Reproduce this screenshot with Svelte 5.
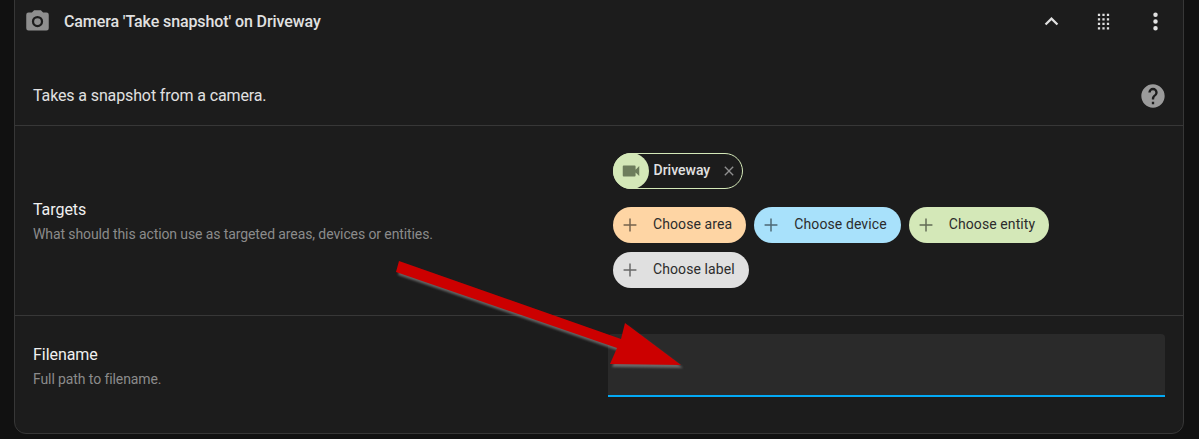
<script>
  const pickers = [
    { label: 'Choose area', cls: 'area' },
    { label: 'Choose device', cls: 'device' },
    { label: 'Choose entity', cls: 'entity' },
    { label: 'Choose label', cls: 'tag' }
  ];
</script>

<div class="page">
  <section class="card">
    <header class="head">
      <svg class="cam" viewBox="0 0 24 24"><path d="M4 4h3l2-2h6l2 2h3a2 2 0 0 1 2 2v12a2 2 0 0 1-2 2H4a2 2 0 0 1-2-2V6a2 2 0 0 1 2-2m8 3a5 5 0 1 0 0 10 5 5 0 0 0 0-10m0 2a3 3 0 1 1 0 6 3 3 0 0 1 0-6"/></svg>
      <h2>Camera 'Take snapshot' on Driveway</h2>
      <div class="actions">
        <svg viewBox="0 0 24 24"><path d="M7.41 15.41 12 10.83l4.59 4.58L18 14l-6-6-6 6z"/></svg>
        <svg viewBox="0 0 24 24"><path d="M7 19v-2h2v2zm4 0v-2h2v2zm4 0v-2h2v2zm-8-4v-2h2v2zm4 0v-2h2v2zm4 0v-2h2v2zm-8-4V9h2v2zm4 0V9h2v2zm4 0V9h2v2zM7 7V5h2v2zm4 0V5h2v2zm4 0V5h2v2z"/></svg>
        <svg viewBox="0 0 24 24"><path d="M12 16a2 2 0 1 1 0 4 2 2 0 0 1 0-4m0-6a2 2 0 1 1 0 4 2 2 0 0 1 0-4m0-6a2 2 0 1 1 0 4 2 2 0 0 1 0-4"/></svg>
      </div>
    </header>

    <div class="intro">
      <p>Takes a snapshot from a camera.</p>
      <svg class="help" viewBox="0 0 24 24"><path d="M15.07 11.25l-.9.92C13.45 12.89 13 13.5 13 15h-2v-.5c0-1.11.45-2.11 1.17-2.83l1.24-1.26c.37-.36.59-.86.59-1.41a2 2 0 0 0-2-2 2 2 0 0 0-2 2H8a4 4 0 0 1 4-4 4 4 0 0 1 4 4c0 .88-.36 1.67-.93 2.25M13 19h-2v-2h2M12 2A10 10 0 0 0 2 12a10 10 0 0 0 10 10 10 10 0 0 0 10-10c0-5.53-4.5-10-10-10"/></svg>
    </div>

    <div class="row targets">
      <div class="info">
        <h3>Targets</h3>
        <p>What should this action use as targeted areas, devices or entities.</p>
      </div>
      <div class="control">
        <div class="chip">
          <span class="chip-icon">
            <svg viewBox="0 0 24 24"><path d="M17 10.5V7a1 1 0 0 0-1-1H4a1 1 0 0 0-1 1v10a1 1 0 0 0 1 1h12a1 1 0 0 0 1-1v-3.5l4 4v-11z"/></svg>
          </span>
          <span class="chip-label">Driveway</span>
          <svg class="close" viewBox="0 0 24 24"><path d="M19 6.41 17.59 5 12 10.59 6.41 5 5 6.41 10.59 12 5 17.59 6.41 19 12 13.41 17.59 19 19 17.59 13.41 12z"/></svg>
        </div>
        <div class="pickers">
          {#each pickers as p}
            <div class="pick {p.cls}">
              <svg viewBox="0 0 24 24"><path d="M19 12.8h-6.2V19h-1.6v-6.2H5v-1.6h6.2V5h1.6v6.2H19z"/></svg>
              <span>{p.label}</span>
            </div>
          {/each}
        </div>
      </div>
    </div>

    <div class="row file">
      <div class="info">
        <h3>Filename</h3>
        <p>Full path to filename.</p>
      </div>
      <div class="field"></div>
    </div>
  </section>

  <svg class="arrow" width="320" height="160" viewBox="0 0 320 160">
    <defs>
      <filter id="sh" x="-10%" y="-10%" width="120%" height="130%">
        <feGaussianBlur stdDeviation="1" />
      </filter>
    </defs>
    <path d="M14 11 L236 89 L240 73 L296 115 L225 114 L232 98 L11 22 Z" transform="translate(2 3)" fill="#8a8a8a" opacity=".65" filter="url(#sh)" />
    <path d="M14 11 L236 89 L240 73 L296 115 L225 114 L232 98 L11 22 Z" fill="#cc0000" />
  </svg>
</div>

<style>
  :global(body) {
    margin: 0;
    background: #111111;
  }
  .page {
    position: relative;
    width: 1199px;
    height: 439px;
    overflow: hidden;
    font-family: Roboto, "Liberation Sans", sans-serif;
    color: #e1e1e1;
  }
  .card {
    margin: -12px 15px 0 14px;
    height: 446px;
    box-sizing: border-box;
    background: #1c1c1c;
    border: 1px solid #373737;
    border-radius: 12px;
    display: flex;
    flex-direction: column;
  }
  .head {
    display: flex;
    align-items: center;
    height: 42px;
    margin-top: 11px;
    padding: 0 8px 0 9px;
    flex: none;
  }
  .cam {
    width: 27px;
    height: 27px;
    fill: #8f8f8f;
    flex: none;
  }
  h2 {
    margin: 0 0 0 13px;
    font-size: 16px;
    font-weight: 500;
    color: #e1e1e1;
    letter-spacing: -0.1px;
    flex: 1;
  }
  .actions {
    display: flex;
    gap: 25px;
    margin-right: 6px;
  }
  .actions svg {
    width: 27px;
    height: 27px;
    fill: #e1e1e1;
  }
  .intro {
    display: flex;
    align-items: center;
    justify-content: space-between;
    height: 84px;
    flex: none;
    padding: 23px 17px 0 18px;
    box-sizing: border-box;
    border-bottom: 1px solid #373737;
  }
  .intro p {
    margin: 0;
    font-size: 16px;
    letter-spacing: -0.12px;
    color: #e1e1e1;
  }
  .help {
    width: 28px;
    height: 28px;
    fill: #9b9b9b;
    margin: 1px -1px 0 0;
  }
  .row {
    display: flex;
    box-sizing: border-box;
    padding: 0 17px 0 18px;
  }
  .targets {
    height: 190px;
    flex: none;
    border-bottom: 1px solid #373737;
    padding-top: 27px;
  }
  .info {
    width: 575px;
    flex: none;
  }
  .targets .info {
    padding-top: 47px;
  }
  h3 {
    margin: 0;
    font-size: 16px;
    font-weight: 400;
    letter-spacing: -0.05px;
    line-height: 20px;
    color: #f0f0f0;
  }
  .info p {
    margin: 4px 0 0;
    font-size: 14px;
    letter-spacing: -0.1px;
    line-height: 20px;
    color: #8b8b8b;
  }
  .control {
    margin-left: 5px;
  }
  .chip {
    display: inline-flex;
    align-items: center;
    width: 130px;
    height: 36px;
    box-sizing: border-box;
    border: 1px solid #d4e8b8;
    border-radius: 18px;
    position: relative;
  }
  .chip-icon {
    width: 36px;
    height: 36px;
    margin: -1px 0 -1px -1px;
    border-radius: 50%;
    background: #d4e8b8;
    display: flex;
    align-items: center;
    justify-content: center;
    flex: none;
  }
  .chip-icon svg {
    width: 22px;
    height: 22px;
    fill: #6d7d5c;
  }
  .chip-label {
    margin: 0 0 2px 4.5px;
    font-size: 14px;
    font-weight: 500;
    color: #e1e1e1;
  }
  .close {
    width: 16px;
    height: 16px;
    fill: #8f8f8f;
    margin-left: 11px;
  }
  .pickers {
    display: flex;
    flex-wrap: wrap;
    gap: 9px 8px;
    margin-top: 18px;
    width: 500px;
  }
  .pick {
    display: flex;
    align-items: center;
    height: 36px;
    border-radius: 18px;
    padding: 0 14px 0 6px;
    color: #2c2c2c;
    font-size: 14px;
    letter-spacing: 0.1px;
  }
  .pick span {
    margin-bottom: 2px;
  }
  .pick svg {
    width: 22px;
    height: 22px;
    fill: rgba(0, 0, 0, 0.54);
    margin-right: 12px;
  }
  .area { background: #fed5a4; }
  .device { background: #a8e1fb; }
  .entity { background: #d4e8b8; }
  .tag { background: #e0e0e0; }
  .file {
    flex: 1;
    padding-top: 18px;
  }
  .file .info {
    padding-top: 11px;
  }
  .file .info p {
    margin-top: 4px;
  }
  .field {
    width: 557px;
    height: 63px;
    box-sizing: border-box;
    background: #2a2a2a;
    border-bottom: 2px solid #03a9f4;
    border-radius: 4px 4px 0 0;
  }
  .arrow {
    position: absolute;
    left: 385px;
    top: 250px;
    pointer-events: none;
  }
</style>
